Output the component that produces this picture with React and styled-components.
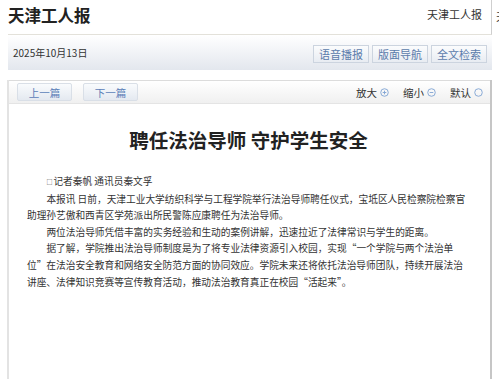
import styled, { createGlobalStyle } from 'styled-components'

const GlobalStyle = createGlobalStyle`
  html, body {
    margin: 0;
    padding: 0;
    background: #fff;
    overflow: hidden;
  }
  body {
    font-family: "Noto Sans CJK SC", "Noto Sans", sans-serif;
    color: #333;
  }
`

const paragraphs = [
  '本报讯 日前，天津工业大学纺织科学与工程学院举行法治导师聘任仪式，宝坻区人民检察院检察官助理孙艺傲和西青区学苑派出所民警陈应康聘任为法治导师。',
  '两位法治导师凭借丰富的实务经验和生动的案例讲解，迅速拉近了法律常识与学生的距离。',
  '据了解，学院推出法治导师制度是为了将专业法律资源引入校园，实现“一个学院与两个法治单位”在法治安全教育和网络安全防范方面的协同效应。学院未来还将依托法治导师团队，持续开展法治讲座、法律知识竞赛等宣传教育活动，推动法治教育真正在校园“活起来”。'
]

const ZoomIcon = ({ kind }) => (
  <svg width="9" height="9" viewBox="0 0 10 10">
    <circle cx="5" cy="5" r="4.2" fill="none" stroke="#7fa3d3" strokeWidth="1" />
    {kind !== 'reset' && <line x1="3" y1="5" x2="7" y2="5" stroke="#7fa3d3" strokeWidth="1" />}
    {kind === 'plus' && <line x1="5" y1="3" x2="5" y2="7" stroke="#7fa3d3" strokeWidth="1" />}
  </svg>
)

const App = () => {
  return (
    <Page>
      <GlobalStyle />
      <Main>
        <Header>
          <Logo>天津工人报</Logo>
          <PaperName>天津工人报</PaperName>
        </Header>
        <DateBar>
          <DateText>2025年10月13日</DateText>
          <BarButtons>
            <BarButton>语音播报</BarButton>
            <BarButton>版面导航</BarButton>
            <BarButton>全文检索</BarButton>
          </BarButtons>
        </DateBar>
        <ArticleBox>
          <Toolbar>
            <PagerButtons>
              <PagerButton>上一篇</PagerButton>
              <PagerButton>下一篇</PagerButton>
            </PagerButtons>
            <ZoomControls>
              <ZoomItem>放大<ZoomIcon kind="plus" /></ZoomItem>
              <ZoomItem>缩小<ZoomIcon kind="minus" /></ZoomItem>
              <ZoomItem>默认<ZoomIcon kind="reset" /></ZoomItem>
            </ZoomControls>
          </Toolbar>
          <Article>
            <Title>聘任法治导师 守护学生安全</Title>
            <Paragraph>
              <Mark>□</Mark>记者秦帆 通讯员秦文孚
            </Paragraph>
            {paragraphs.map((p, i) => (
              <Paragraph key={i}>{p}</Paragraph>
            ))}
          </Article>
        </ArticleBox>
      </Main>
      <Side>
        <SideHeader>天津工人报</SideHeader>
      </Side>
    </Page>
  )
}

//Style-------------------------------------------------------------------------

const Page = styled.div`
  display: flex;
  padding-left: 8px;
  width: 491px;
  height: 379px;
  overflow: hidden;
`

const Main = styled.div`
  flex: 0 0 484px;
  display: flex;
  flex-direction: column;
`

const Header = styled.div`
  height: 33px;
  display: flex;
  align-items: center;
  justify-content: space-between;
  padding-bottom: 1px;
  border-bottom: 1px solid #e3e1da;
  border-right: 1px solid #cfcfcf;
`

const Logo = styled.div`
  font-size: 16.5px;
  font-weight: bold;
  color: #222;
  margin-top: -4px;
`

const PaperName = styled.div`
  font-size: 11px;
  color: #333;
  margin-right: 9px;
  margin-top: -6px;
`

const DateBar = styled.div`
  height: 35px;
  display: flex;
  align-items: center;
  justify-content: space-between;
  padding: 0 5px;
  background: linear-gradient(#ffffff, #e3e7ee);
`

const DateText = styled.div`
  font-size: 10px;
  color: #333;
`

const BarButtons = styled.div`
  display: flex;
  gap: 3px;
  margin-top: 2px;
`

const BarButton = styled.div`
  width: 54px;
  height: 16px;
  display: flex;
  align-items: center;
  justify-content: center;
  font-size: 11px;
  color: #5b7bab;
  border: 1px solid #ccd4df;
  background: linear-gradient(#fbfcfd, #e8ecf2);
`

const ArticleBox = styled.div`
  margin-top: 10px;
  flex: 1;
  border-left: 2px solid #e3e3e3;
  border-right: 2px solid #c6c6c6;
  margin-left: -1px;
`

const Toolbar = styled.div`
  height: 22px;
  display: flex;
  align-items: center;
  justify-content: space-between;
  border-top: 1px solid #dcdcdc;
  border-bottom: 1px solid #e4e4e4;
  background: linear-gradient(#ffffff, #f0f0f0);
  padding: 0 8px;
`

const PagerButtons = styled.div`
  display: flex;
  gap: 11px;
`

const PagerButton = styled.div`
  width: 53px;
  height: 16px;
  display: flex;
  align-items: center;
  justify-content: center;
  font-size: 10.5px;
  color: #5c80b8;
  border: 1px solid #d9dfe7;
  border-radius: 2px;
  background: linear-gradient(#f9fbfd, #e4e9f0);
`

const ZoomControls = styled.div`
  display: flex;
  gap: 14px;
  margin-right: -1px;
`

const ZoomItem = styled.div`
  display: flex;
  align-items: center;
  gap: 3px;
  font-size: 10.5px;
  color: #333;
`

const Article = styled.div`
  padding: 22px 20px 0 18px;
`

const Title = styled.h1`
  margin: 0 0 19px;
  text-align: center;
  font-size: 19.5px;
  line-height: 28px;
  font-weight: bold;
  color: #222;
`

const Paragraph = styled.p`
  margin: 0;
  font-size: 9.7px;
  line-height: 16.6px;
  text-indent: 2em;
  color: #333;
`

const Mark = styled.span`
  font-size: 6px;
  margin-right: 1px;
  vertical-align: 1px;
`

const Side = styled.div`
  flex: 0 0 auto;
  padding-left: 4px;
`

const SideHeader = styled.div`
  font-size: 11px;
  color: #333;
  white-space: nowrap;
  margin-top: 8px;
`

export default App
